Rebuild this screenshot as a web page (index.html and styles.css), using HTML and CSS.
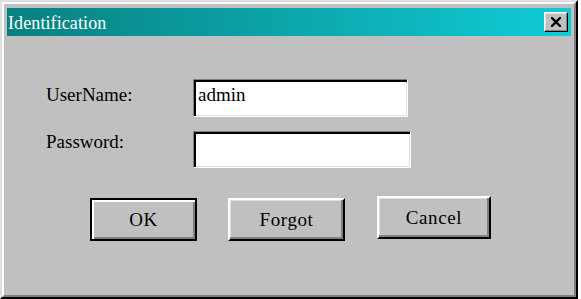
FILE: index.html
```html
<!DOCTYPE html>
<html lang="en">

<head>
    <meta charset="UTF-8" />
    <meta name="viewport" content="width=device-width, initial-scale=1" />
    <title>Identification</title>
    <link rel="stylesheet" href="styles.css">
</head>

<body>
    <div class="window">
        <div class="frame">
            <div class="titlebar">
                <span class="title">Identification</span>
                <button class="close-btn" aria-label="Close">
          <svg width="10" height="10" viewBox="0 0 10 10">
            <path d="M1 1 L9 9 M9 1 L1 9" stroke="#000" stroke-width="2.4" stroke-linecap="square" />
          </svg>
        </button>
            </div>
            <div class="content">
                <div class="row row-user">
                    <label for="userName">UserName:</label>
                    <input type="text" id="userName" class="field field-user" value="admin" />
                </div>
                <div class="row row-pass">
                    <label for="password">Password:</label>
                    <input type="password" id="password" class="field field-pass" />
                </div>
                <div class="buttons">
                    <button class="btn btn-ok">OK</button>
                    <button class="btn btn-forgot">Forgot</button>
                    <button class="btn btn-cancel">Cancel</button>
                </div>
            </div>
        </div>
    </div>
</body>

</html>
```

FILE: styles.css
```css
body {
    margin: 0;
    background: #fff;
    font-family: 'Liberation Serif', 'Times New Roman', serif;
}

.window {
    width: 578px;
    height: 299px;
    box-sizing: border-box;
    border: 2px solid;
    border-color: #dfdfdf #000 #000 #dfdfdf;
    background: #c0c0c0;
}

.frame {
    height: 100%;
    box-sizing: border-box;
    border: 2px solid;
    border-color: #fff #808080 #808080 #fff;
    padding: 4px 3px 3px 3px;
}

.titlebar {
    height: 28px;
    display: flex;
    align-items: center;
    justify-content: space-between;
    padding: 0 3px 0 1px;
    background: linear-gradient(to right, #088080, #10ccd6);
}

.title {
    color: #fff;
    font-size: 18px;
    line-height: 20px;
    margin-top: 1px;
    letter-spacing: 0.1px;
}

.close-btn {
    width: 24px;
    height: 20px;
    padding: 0;
    display: flex;
    align-items: center;
    justify-content: center;
    background: #c0c0c0;
    border: 1px solid;
    border-color: #fff #000 #000 #fff;
    box-shadow: inset -1px -1px #808080, inset 1px 1px #dfdfdf;
}

.content {
    padding: 43px 0 0 39px;
}

.row {
    display: flex;
    align-items: flex-start;
}

.row label {
    width: 147px;
    font-size: 19px;
    line-height: 21px;
    color: #000;
}

.row-user label {
    margin-top: 5px;
}

.row-pass {
    margin-top: 14px;
}

.field {
    box-sizing: border-box;
    height: 38px;
    margin: 0;
    padding: 0 4px 7px 4px;
    font-family: inherit;
    font-size: 19px;
    color: #000;
    background: #fff;
    border: 1px solid;
    border-color: #808080 #fff #fff #808080;
    box-shadow: inset 2px 2px #000, inset -1px -1px #dfdfdf;
    outline: none;
}

.field-user {
    width: 215px;
}

.field-pass {
    width: 218px;
    height: 37px;
}

.buttons {
    display: flex;
    align-items: flex-start;
    margin: 30px 0 0 44px;
}

.btn {
    box-sizing: border-box;
    height: 43px;
    padding: 0;
    font-family: inherit;
    font-size: 19px;
    color: #000;
    letter-spacing: 0.6px;
    background: #c0c0c0;
    border: 2px solid;
    border-color: #fff #000 #000 #fff;
    box-shadow: inset -2px -2px #808080, inset 1px 1px #dfdfdf;
}

.btn-ok {
    width: 107px;
    border-color: #000;
    box-shadow: inset 2px 2px #fff, inset -2px -2px #808080;
}

.btn-forgot {
    width: 117px;
    margin-left: 31px;
}

.btn-cancel {
    width: 114px;
    margin-left: 32px;
    margin-top: -2px;
}
```
